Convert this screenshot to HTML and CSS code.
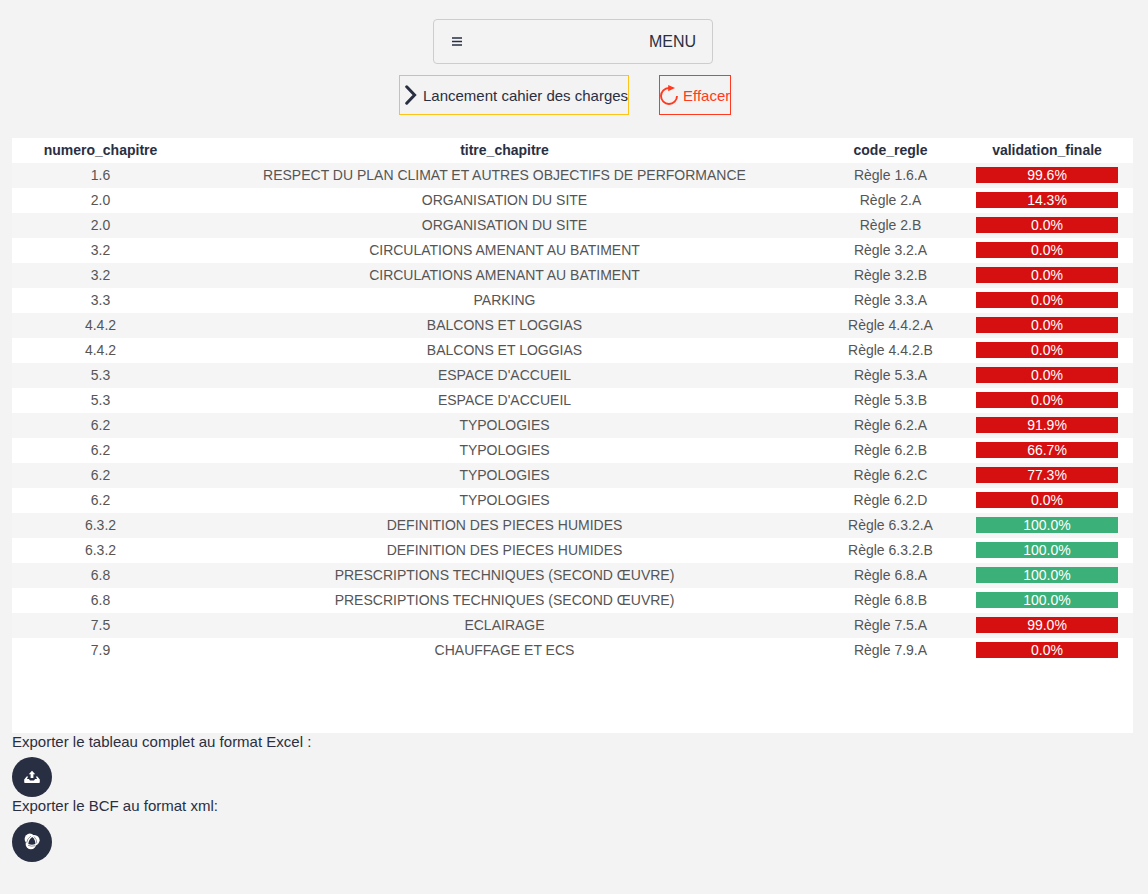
FILE: index.html
```html
<!DOCTYPE html>
<html lang="fr">
<head>
<meta charset="utf-8">
<title>Cahier des charges</title>
<link rel="stylesheet" href="styles.css">
</head>
<body>
<header class="top">
  <button class="menu">
    <svg class="menu-icon" viewBox="0 0 10 10"><path d="M0 1h10M0 4.5h10M0 8h10"/></svg>
    <span>MENU</span>
  </button>
  <div class="actions">
    <button class="action launch">
      <svg class="chevron" viewBox="0 0 12 20"><path d="M1.7 1.8L9.6 10L1.7 18.2"/></svg>
      <span class="launch-label">Lancement cahier des charges</span>
    </button>
    <button class="action clear">
      <svg class="reload" viewBox="0 0 20 20"><path class="arc" d="M9 3A8 8 0 1 0 17 11"/><path class="tip" d="M8.2 0L15 3L8.2 6.2z"/></svg>
      <span>Effacer</span>
    </button>
  </div>
</header>
<main class="content">
  <div class="panel">
    <table class="rules">
      <colgroup><col class="c-num"><col class="c-title"><col class="c-code"><col class="c-valid"></colgroup>
      <thead><tr><th>numero_chapitre</th><th>titre_chapitre</th><th>code_regle</th><th>validation_finale</th></tr></thead>
      <tbody>
        <tr><td>1.6</td><td>RESPECT DU PLAN CLIMAT ET AUTRES OBJECTIFS DE PERFORMANCE</td><td>Règle 1.6.A</td><td><div class="bar">99.6%</div></td></tr>
        <tr><td>2.0</td><td>ORGANISATION DU SITE</td><td>Règle 2.A</td><td><div class="bar">14.3%</div></td></tr>
        <tr><td>2.0</td><td>ORGANISATION DU SITE</td><td>Règle 2.B</td><td><div class="bar">0.0%</div></td></tr>
        <tr><td>3.2</td><td>CIRCULATIONS AMENANT AU BATIMENT</td><td>Règle 3.2.A</td><td><div class="bar">0.0%</div></td></tr>
        <tr><td>3.2</td><td>CIRCULATIONS AMENANT AU BATIMENT</td><td>Règle 3.2.B</td><td><div class="bar">0.0%</div></td></tr>
        <tr><td>3.3</td><td>PARKING</td><td>Règle 3.3.A</td><td><div class="bar">0.0%</div></td></tr>
        <tr><td>4.4.2</td><td>BALCONS ET LOGGIAS</td><td>Règle 4.4.2.A</td><td><div class="bar">0.0%</div></td></tr>
        <tr><td>4.4.2</td><td>BALCONS ET LOGGIAS</td><td>Règle 4.4.2.B</td><td><div class="bar">0.0%</div></td></tr>
        <tr><td>5.3</td><td>ESPACE D'ACCUEIL</td><td>Règle 5.3.A</td><td><div class="bar">0.0%</div></td></tr>
        <tr><td>5.3</td><td>ESPACE D'ACCUEIL</td><td>Règle 5.3.B</td><td><div class="bar">0.0%</div></td></tr>
        <tr><td>6.2</td><td>TYPOLOGIES</td><td>Règle 6.2.A</td><td><div class="bar">91.9%</div></td></tr>
        <tr><td>6.2</td><td>TYPOLOGIES</td><td>Règle 6.2.B</td><td><div class="bar">66.7%</div></td></tr>
        <tr><td>6.2</td><td>TYPOLOGIES</td><td>Règle 6.2.C</td><td><div class="bar">77.3%</div></td></tr>
        <tr><td>6.2</td><td>TYPOLOGIES</td><td>Règle 6.2.D</td><td><div class="bar">0.0%</div></td></tr>
        <tr><td>6.3.2</td><td>DEFINITION DES PIECES HUMIDES</td><td>Règle 6.3.2.A</td><td><div class="bar ok">100.0%</div></td></tr>
        <tr><td>6.3.2</td><td>DEFINITION DES PIECES HUMIDES</td><td>Règle 6.3.2.B</td><td><div class="bar ok">100.0%</div></td></tr>
        <tr><td>6.8</td><td>PRESCRIPTIONS TECHNIQUES (SECOND ŒUVRE)</td><td>Règle 6.8.A</td><td><div class="bar ok">100.0%</div></td></tr>
        <tr><td>6.8</td><td>PRESCRIPTIONS TECHNIQUES (SECOND ŒUVRE)</td><td>Règle 6.8.B</td><td><div class="bar ok">100.0%</div></td></tr>
        <tr><td>7.5</td><td>ECLAIRAGE</td><td>Règle 7.5.A</td><td><div class="bar">99.0%</div></td></tr>
        <tr><td>7.9</td><td>CHAUFFAGE ET ECS</td><td>Règle 7.9.A</td><td><div class="bar">0.0%</div></td></tr>
      </tbody>
    </table>
  </div>
  <section class="exports">
    <p class="export-label">Exporter le tableau complet au format Excel :</p>
    <button class="round" aria-label="Excel">
      <svg class="round-icon" viewBox="0 0 16 16"><path class="solid" d="M8 1.7L11.2 5.2H9.4V9H6.6V5.2H4.8z"/><path class="solid" d="M2.6 7.6H4.2L2.9 10H4.9L6 11.4H10L11.1 10H13.1L11.8 7.6H13.4L15.8 10.6V13.2Q15.8 14 15 14H1Q.2 14 .2 13.2V10.6z"/></svg>
    </button>
    <p class="export-label second">Exporter le BCF au format xml:</p>
    <button class="round" aria-label="BCF">
      <svg class="round-icon knot" viewBox="0 0 16 17"><circle cx="5.9" cy="5.9" r="5.3"/><circle cx="10.3" cy="7.2" r="5.3"/><circle cx="6.9" cy="11" r="5.3"/><path class="core" d="M8.2 4Q11.4 6.4 11.4 11Q8 12.4 4.3 11Q4.6 6.6 8.2 4z"/><path class="seam" d="M2.7 9.8Q3.1 5.4 7 3M10 3.5Q13 6.4 12.8 10.4M11.4 12.7Q7.5 13.9 4 12.3"/></svg>
    </button>
  </section>
</main>
</body>
</html>
```
FILE: styles.css
```css
* { box-sizing: border-box; }
body {
  margin: 0;
  background: #f3f3f3;
  color: #292f42;
  font-family: "Liberation Sans", Arial, sans-serif;
}
button {
  margin: 0;
  padding: 0;
  background: none;
  color: inherit;
  font: inherit;
}
svg { display: block; flex: none; fill: none; stroke: currentColor; }
.top {
  display: flex;
  flex-direction: column;
  align-items: center;
  padding-top: 19px;
  padding-right: 2px;
}
.menu {
  display: flex;
  align-items: center;
  justify-content: space-between;
  width: 280px;
  height: 45px;
  padding: 0 16px 0 18px;
  border: 1px solid #cdcdcf;
  border-radius: 4px;
  font-size: 16px;
}
.menu-icon { width: 10px; height: 10px; stroke-width: 1.3; }
.actions {
  display: flex;
  gap: 30px;
  margin-top: 11px;
  padding-right: 16px;
}
.action {
  display: flex;
  align-items: center;
  height: 40px;
  border: 1px solid;
  font-size: 15px;
  white-space: nowrap;
}
.launch { width: 230px; border-color: #fcc419; gap: 6px; padding-left: 5px; }
.clear { width: 72px; border-color: #ff3a20; color: #ff3a20; gap: 3px; }
.chevron { width: 12px; height: 20px; stroke-width: 3; stroke-linecap: round; }
.reload { width: 20px; height: 20px; }
.arc { stroke-width: 1.9; }
.tip { fill: currentColor; stroke: none; }
.content { padding: 23px 15px 0 12px; }
.panel { height: 595px; background: #fff; }
.rules {
  width: 100%;
  table-layout: fixed;
  border-collapse: collapse;
  font-size: 14px;
  line-height: 16px;
  text-align: center;
  white-space: nowrap;
}
.c-num { width: 177px; }
.c-title { width: 631px; }
.c-code { width: 141px; }
.c-valid { width: 172px; }
.rules tr { height: 25px; }
.rules th, .rules td { padding: 0 0 1px; }
.rules td { color: #555; }
.rules tbody tr:nth-child(odd) { background: #f5f5f5; }
.bar {
  height: 16px;
  margin: 0 15px;
  background: #d61010;
  color: #fff;
}
.bar.ok { background: #3cb079; }
.export-label {
  margin: 0;
  height: 24px;
  font-size: 15px;
  line-height: 18px;
}
.export-label.second { height: 25px; }
.round {
  display: flex;
  align-items: center;
  justify-content: center;
  width: 40px;
  height: 40px;
  border: 0;
  border-radius: 50%;
  background: #292f42;
  color: #fff;
}
.round-icon { width: 16px; height: 16px; }
.solid { fill: currentColor; stroke: none; }
.knot { height: 17px; margin-bottom: 1px; fill: currentColor; stroke: none; }
.core { fill: #292f42; }
.seam { fill: none; stroke: #292f42; stroke-width: 0.5; }
```
